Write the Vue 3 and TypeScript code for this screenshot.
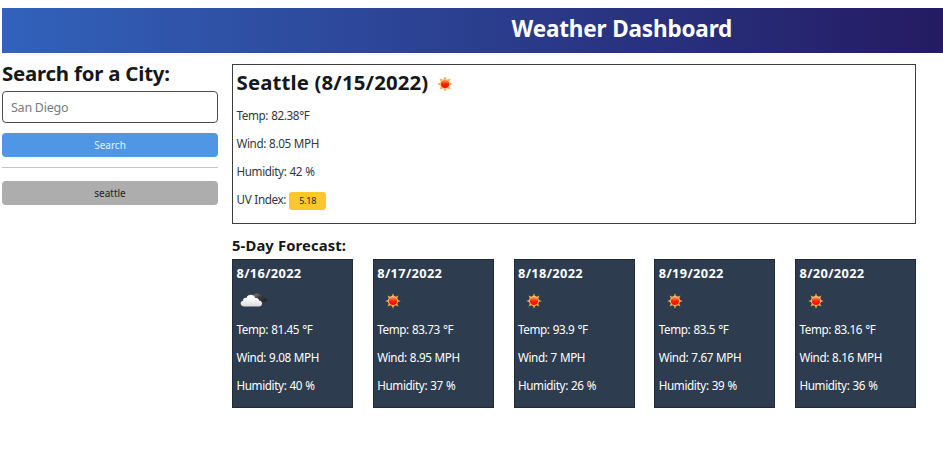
<script setup lang="ts">
import { ref } from 'vue'

interface Day {
  date: string
  icon: 'sun' | 'clouds'
  temp: string
  wind: string
  humidity: string
}

const city = ref('')
const history = ref<string[]>(['seattle'])
const rays: number[] = [0, 45, 90, 135, 180, 225, 270, 315]

const days: Day[] = [
  { date: '8/16/2022', icon: 'clouds', temp: '81.45', wind: '9.08', humidity: '40' },
  { date: '8/17/2022', icon: 'sun', temp: '83.73', wind: '8.95', humidity: '37' },
  { date: '8/18/2022', icon: 'sun', temp: '93.9', wind: '7', humidity: '26' },
  { date: '8/19/2022', icon: 'sun', temp: '83.5', wind: '7.67', humidity: '39' },
  { date: '8/20/2022', icon: 'sun', temp: '83.16', wind: '8.16', humidity: '36' },
]
</script>

<template>
  <div class="page">
    <svg class="defs" width="0" height="0">
      <defs>
        <linearGradient id="sunFill" x1="0" y1="0" x2="0" y2="1">
          <stop offset="0.1" stop-color="#ff8a45" />
          <stop offset="0.5" stop-color="#fb2208" />
          <stop offset="1" stop-color="#f60c00" />
        </linearGradient>
        <linearGradient id="cloudFill" x1="0" y1="0" x2="0" y2="1">
          <stop offset="0.3" stop-color="#ffffff" />
          <stop offset="1" stop-color="#d9d9d9" />
        </linearGradient>
        <linearGradient id="darkFill" x1="0" y1="0" x2="1" y2="1">
          <stop offset="0" stop-color="#85888a" />
          <stop offset="0.45" stop-color="#3a3a3a" />
          <stop offset="1" stop-color="#1d1d1d" />
        </linearGradient>
        <symbol id="sun" viewBox="0 0 16 16">
          <path
            v-for="angle in rays"
            :key="angle"
            d="M8 0.3 L9.8 4.5 H6.2 Z"
            fill="#f3a13c"
            :transform="`rotate(${angle} 8 8)`"
          />
          <circle cx="8" cy="8" r="4.9" fill="#ffc66d" />
          <circle cx="8" cy="8" r="4.1" fill="url(#sunFill)" />
        </symbol>
        <symbol id="clouds" viewBox="0 0 28 14">
          <path d="M13 5 C13 0.6 17 -0.8 19.5 1.6 C22 1.1 23.7 2.8 23.6 4.3 C26 4.4 28 6 27.4 7.3 C25.5 9.5 20 9.5 17 9 Z" fill="url(#darkFill)" />
          <path d="M4.5 13.6 C-0.3 13.6 -0.5 8.4 3.1 7.8 C3 5.5 5 4.4 6.5 5 C7.5 0.8 14 0.5 15.2 5 C17.5 4.5 19.2 6 19 7.5 C23.2 7.8 23 13.6 19 13.6 Z" fill="url(#cloudFill)" />
        </symbol>
      </defs>
    </svg>

    <header class="banner"><h1>Weather Dashboard</h1></header>

    <main class="content">
      <aside class="sidebar">
        <h2>Search for a City:</h2>
        <input v-model="city" type="text" placeholder="San Diego" />
        <button class="search" type="button">Search</button>
        <hr />
        <button v-for="name in history" :key="name" class="past" type="button">{{ name }}</button>
      </aside>

      <section class="results">
        <article class="current">
          <h2><span>Seattle (8/15/2022)</span><svg class="sun"><use href="#sun" /></svg></h2>
          <p>Temp: 82.38°F</p>
          <p>Wind: 8.05 MPH</p>
          <p>Humidity: 42 %</p>
          <p>UV Index: <span class="uv">5.18</span></p>
        </article>

        <h3>5-Day Forecast:</h3>
        <div class="forecast">
          <article v-for="day in days" :key="day.date" class="card">
            <h4>{{ day.date }}</h4>
            <div class="icon">
              <svg :class="day.icon"><use :href="`#${day.icon}`" /></svg>
            </div>
            <p>Temp: {{ day.temp }} °F</p>
            <p>Wind: {{ day.wind }} MPH</p>
            <p>Humidity: {{ day.humidity }} %</p>
          </article>
        </div>
      </section>
    </main>
  </div>
</template>

<style>
body {
  background: #fff;
  overflow: hidden;
}
</style>

<style scoped>
.page {
  box-sizing: border-box;
  height: 456px;
  padding: 8px 0 0 2px;
  font-family: "Noto Sans", "Open Sans", sans-serif;
  font-size: 11.7px;
  letter-spacing: -0.38px;
  color: #212529;
}
.page * {
  box-sizing: border-box;
}
.defs {
  display: block;
}
h1, h2, h3, h4, p {
  margin: 0;
  white-space: nowrap;
}
.banner {
  height: 45px;
  padding-left: 509.5px;
  background: linear-gradient(to right, #3262bb, #241b62);
}
h1 {
  font-size: 22.5px;
  line-height: 41px;
  letter-spacing: -0.16px;
  color: #fff;
}
.content {
  display: flex;
  gap: 14px;
  padding-top: 11px;
}
.sidebar {
  display: flex;
  flex-direction: column;
  width: 216px;
}
h2 {
  color: #151719;
  font-size: 20.4px;
  letter-spacing: -0.2px;
}
.sidebar h2 {
  height: 27px;
  line-height: 18px;
}
input {
  height: 32px;
  padding: 1px 8px 0;
  border: 1px solid #4d4d4d;
  border-radius: 4px;
  font: 12.5px "Noto Sans", sans-serif;
  letter-spacing: -0.25px;
  outline: none;
}
input::placeholder {
  color: #777b80;
  opacity: 1;
}
button {
  height: 24px;
  padding: 0;
  border: 0;
  border-radius: 4px;
  font: 10px "Noto Sans", sans-serif;
}
.search {
  margin-top: 10px;
  background: #4f97e4;
  color: #e4f0fc;
}
hr {
  width: 100%;
  height: 1px;
  margin: 10px 0 13px;
  border: 0;
  background: #c4c4c4;
}
.past {
  height: 24px;
  background: #adadad;
  color: #222;
}
.results {
  width: 684px;
}
.current {
  height: 160px;
  padding: 4px 3.5px;
  border: 1px solid #3c3c3c;
}
.current h2 {
  display: flex;
  align-items: center;
  gap: 9px;
  height: 28px;
  margin-bottom: 4px;
  letter-spacing: 0.14px;
  line-height: 26px;
}
.current h2 span {
  height: 28px;
}
.sun {
  display: block;
  width: 16px;
  height: 16px;
}
.current .sun {
  margin-top: 2px;
}
p {
  height: 28px;
  line-height: 28px;
  word-spacing: 0.4px;
}
.current p {
  color: #33373b;
}
.uv {
  display: inline-block;
  width: 37px;
  height: 18px;
  border-radius: 3px;
  background: #ffc72c;
  color: #212529;
  font-size: 9px;
  letter-spacing: -0.2px;
  line-height: 18px;
  text-align: center;
  vertical-align: middle;
}
h3 {
  height: 35px;
  font-size: 14.8px;
  line-height: 42px;
  letter-spacing: 0.12px;
  color: #151719;
}
.forecast {
  display: grid;
  grid-template-columns: repeat(5, 121px);
  justify-content: space-between;
}
.card {
  height: 149px;
  padding: 0 3.5px;
  border: 1px solid #202b36;
  background: #2d3d4f;
  color: #fff;
}
h4 {
  height: 27px;
  font-size: 12.8px;
  line-height: 26px;
  letter-spacing: 0.35px;
}
.icon {
  height: 28px;
  padding: 6px 0 0 8px;
}
.clouds {
  display: block;
  width: 28px;
  height: 14px;
  margin-left: -5px;
}
</style>
